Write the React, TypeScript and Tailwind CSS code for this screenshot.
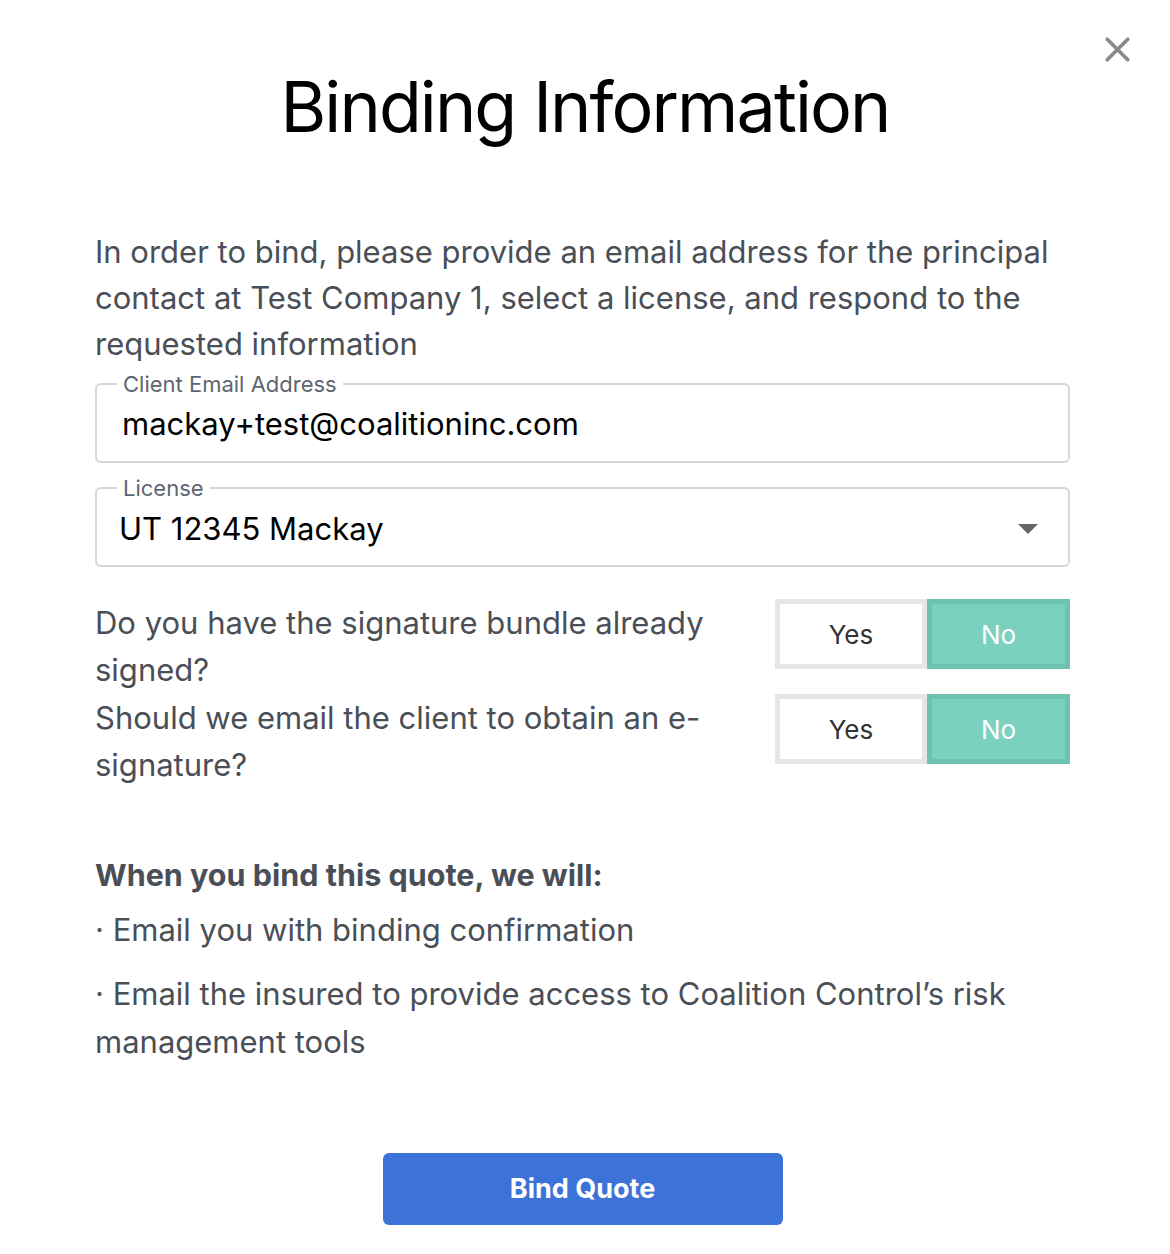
import { X } from "lucide-react";

type Choice = "yes" | "no";

function YesNo({ value }: { value: Choice }) {
  return (
    <div className="flex h-[70px] w-[295px] shrink-0">
      <button
        className={
          value === "yes"
            ? "w-[152px] border-[5px] border-[#6fc2b0] bg-[#7bd1c0] text-[26px] text-white"
            : "w-[152px] border-[5px] border-[#e6e6e6] bg-white text-[26px] text-[#333]"
        }
      >
        Yes
      </button>
      <button
        className={
          value === "no"
            ? "w-[143px] border-[5px] border-[#6fc2b0] bg-[#7bd1c0] text-[26px] text-white"
            : "w-[143px] border-[5px] border-[#e6e6e6] bg-white text-[26px] text-[#333]"
        }
      >
        No
      </button>
    </div>
  );
}

const questions = [
  { text: "Do you have the signature bundle already signed?", value: "no" as Choice },
  { text: "Should we email the client to obtain an e-signature?", value: "no" as Choice },
];

export default function App() {
  return (
    <div className="relative min-h-[1254px] w-[1170px] bg-white font-['Inter',sans-serif]">
      <button className="absolute top-[29px] right-[32px] text-[#8a8a8a]">
        <X size={41} strokeWidth={2.2} />
      </button>

      <h1 className="pt-[72px] text-center text-[70px] leading-[70px] font-normal tracking-[-1.9px] text-black">
        Binding Information
      </h1>

      <div className="mt-[87px] pr-[100px] pl-[95px]">
        <p className="text-[31px] leading-[46px] text-[#4a4f57]">
          In order to bind, please provide an email address for the principal contact at Test Company 1,
          select a license, and respond to the requested information
        </p>

        <fieldset className="mt-[4px] rounded-[6px] border-2 border-[#d3d7dc] px-[25px] pt-[9px] pb-[19px]">
          <legend className="ml-[-5px] px-[6px] text-[22px] leading-[26px] text-[#5f6670]">
            Client Email Address
          </legend>
          <div className="h-[36px] text-[31px] leading-[36px] text-black">mackay+test@coalitioninc.com</div>
        </fieldset>

        <fieldset className="mt-[12px] rounded-[6px] border-2 border-[#d3d7dc] pt-[10px] pr-[30px] pb-[18px] pl-[22px]">
          <legend className="ml-[-2px] px-[6px] text-[22px] leading-[26px] text-[#5f6670]">License</legend>
          <div className="flex h-[36px] items-center justify-between">
            <span className="text-[31px] leading-[36px] text-black">UT 12345 Mackay</span>
            <svg width="20" height="10" viewBox="0 0 20 10">
              <path d="M0 0 L20 0 L10 10 Z" fill="#666" />
            </svg>
          </div>
        </fieldset>

        <div className="mt-[32px] flex flex-col">
          {questions.map((q) => (
            <div key={q.text} className="flex items-start justify-between">
              <p className="h-[95px] w-[630px] text-[31px] leading-[47px] text-[#4a4f57]">{q.text}</p>
              <YesNo value={q.value} />
            </div>
          ))}
        </div>

        <div className="mt-[66px] text-[#4a4f57]">
          <h2 className="text-[30.5px] leading-[40px] font-bold">When you bind this quote, we will:</h2>
          <p className="mt-[11px] text-[31px] leading-[48px]">· Email you with binding confirmation</p>
          <p className="mt-[16px] text-[31px] leading-[48px]">
            · Email the insured to provide access to Coalition Control’s risk management tools
          </p>
        </div>

        <div className="mt-[87px] flex justify-center">
          <button className="h-[72px] w-[400px] rounded-[6px] bg-[#3d72d9] text-[27px] font-bold text-white">
            Bind Quote
          </button>
        </div>
      </div>
    </div>
  );
}
